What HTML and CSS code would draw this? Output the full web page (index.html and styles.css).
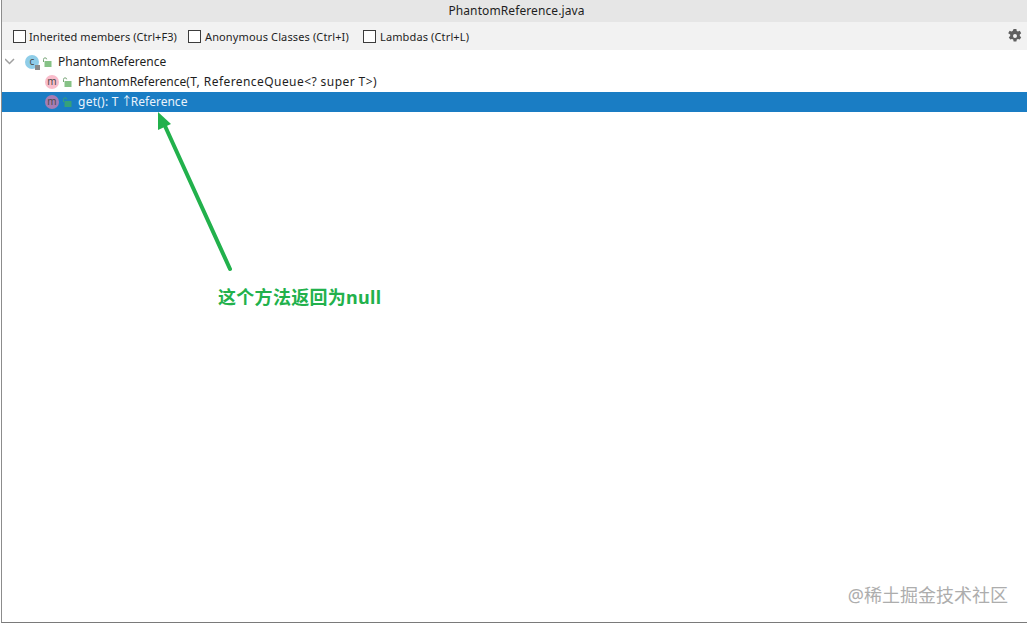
FILE: index.html
```html
<!DOCTYPE html>
<html lang="en">
<head>
<meta charset="utf-8">
<title>PhantomReference.java</title>
<link rel="stylesheet" href="styles.css">
</head>
<body>
<div class="window">
  <header class="titlebar">PhantomReference.java</header>
  <div class="toolbar">
    <label class="check"><span class="box"></span>Inherited members (Ctrl+F3)</label>
    <label class="check"><span class="box"></span><span class="check-wide">Anonymous Classes (Ctrl+I)</span></label>
    <label class="check"><span class="box"></span><span class="check-wide">Lambdas (Ctrl+L)</span></label>
    <svg class="gear" width="16" height="16" viewBox="0 0 16 16">
      <path fill="#5f5f5f" fill-rule="evenodd" d="M6.600 1h2.800l.4 1.900 1.200.6 1.800-.7 1.400 2.400-1.400 1.300v1.400l1.400 1.300-1.400 2.400-1.800-.7-1.200.6-.4 1.900H6.600l-.4-1.900-1.200-.6-1.800.7-1.400-2.400 1.400-1.300V6.500L1.200 5.200l1.400-2.400 1.800.7 1.200-.6zM8 6a2 2 0 1 0 0 4 2 2 0 0 0 0-4z"/>
    </svg>
  </div>
  <ul class="tree">
    <li class="row row-root">
      <svg class="chevron" width="12" height="12" viewBox="0 0 12 12"><path d="M0 3 4.500 7.500 9 3" fill="none" stroke="#a0a0a0" stroke-width="1.500"/></svg>
      <span class="badge badge-class">c<i class="pin"></i></span>
      <svg class="lock" width="10" height="10" viewBox="0 0 10 10"><rect x="2.500" y="4" width="7" height="6" fill="#86c286"/><path d="M1.500 5V2.600a1.600 1.600 0 0 1 3.200-.3" fill="none" stroke="#7aa67a"/></svg>
      <span class="label">PhantomReference</span>
    </li>
    <li class="row row-member">
      <span class="badge badge-method">m</span>
      <svg class="lock" width="10" height="10" viewBox="0 0 10 10"><rect x="2.500" y="4" width="7" height="6" fill="#86c286"/><path d="M1.500 5V2.600a1.600 1.600 0 0 1 3.200-.3" fill="none" stroke="#7aa67a"/></svg>
      <span class="label">PhantomReference<span class="params">(T, ReferenceQueue&lt;? super T&gt;)</span></span>
    </li>
    <li class="row row-member row-selected">
      <span class="badge badge-method-selected">m</span>
      <svg class="lock" width="10" height="10" viewBox="0 0 10 10"><rect x="2.500" y="4" width="7" height="6" fill="#35a27a"/><path d="M1.500 5V2.600a1.600 1.600 0 0 1 3.200-.3" fill="none" stroke="#35a27a"/></svg>
      <span class="label"><span class="signature">get(): T</span> <span class="up">↑</span>Reference</span>
    </li>
  </ul>
  <svg class="arrow" width="90" height="170" viewBox="0 0 90 170">
    <path d="M72 157 7 14" fill="none" stroke="#22b14c" stroke-width="4" stroke-linecap="round"/>
    <path d="M0 0 0 18 13 12z" fill="#22b14c"/>
  </svg>
  <div class="note">这个方法返回为null</div>
  <div class="watermark">@稀土掘金技术社区</div>
</div>
</body>
</html>
```
FILE: styles.css
```css
* { box-sizing: border-box; }
html, body { margin: 0; height: 100%; background: #fff; }
body { font-family: "Noto Sans", "Noto Sans CJK SC", sans-serif; font-size: 12px; color: #1e1e1e; overflow: hidden; }
.window { position: relative; height: 623px; margin-left: 1px; border-left: 1px solid #8c8c8c; border-bottom: 1px solid #7a7a7a; background: #fff; }
.titlebar { height: 22px; padding-left: 4px; background: #e6e6e6; text-align: center; line-height: 21px; letter-spacing: .1px; }
.toolbar { height: 28px; display: flex; align-items: center; padding-left: 11px; background: #f2f2f2; font-size: 11px; letter-spacing: .06px; }
.check { width: 175px; display: flex; align-items: center; gap: 3px; }
.check-wide { margin-left: 1px; letter-spacing: .13px; }
.box { width: 13px; height: 13px; background: #fff; border: 1px solid #3c3c3c; }
.gear { margin-left: auto; margin-right: 4px; }
.tree { list-style: none; margin: 2px 0 0; padding: 0; }
.row { height: 20px; display: flex; align-items: center; }
.row-root { padding-left: 3px; }
.row-member { padding-left: 43px; }
.row-selected { background: #1a7dc4; color: #eaf3fb; }
.label { margin-top: -2px; }
.params { letter-spacing: .43px; }
.signature { letter-spacing: .25px; }
.up { letter-spacing: -2px; margin-left: -1px; }
.chevron { margin-right: 8px; }
.badge { position: relative; width: 14px; height: 14px; padding-bottom: 2px; flex: none; border-radius: 50%; display: flex; align-items: center; justify-content: center; font-size: 10px; line-height: 1; color: #4a4a4a; }
.badge-class { background: #8fcde8; }
.badge-method { background: #f9bccb; }
.badge-method-selected { background: #a67db4; }
.pin { position: absolute; right: -1px; bottom: -1px; width: 5px; height: 5px; background: #8a8a8a; }
.lock { flex: none; margin: 0 6px 0 3px; }
.arrow { position: absolute; left: 156px; top: 112px; }
.note { position: absolute; left: 216px; top: 284px; font-size: 18px; line-height: 26px; font-weight: 700; color: #22b14c; letter-spacing: .3px; }
.watermark { position: absolute; right: 19px; top: 582px; font-size: 18px; line-height: 26px; color: #adadad; }
```
